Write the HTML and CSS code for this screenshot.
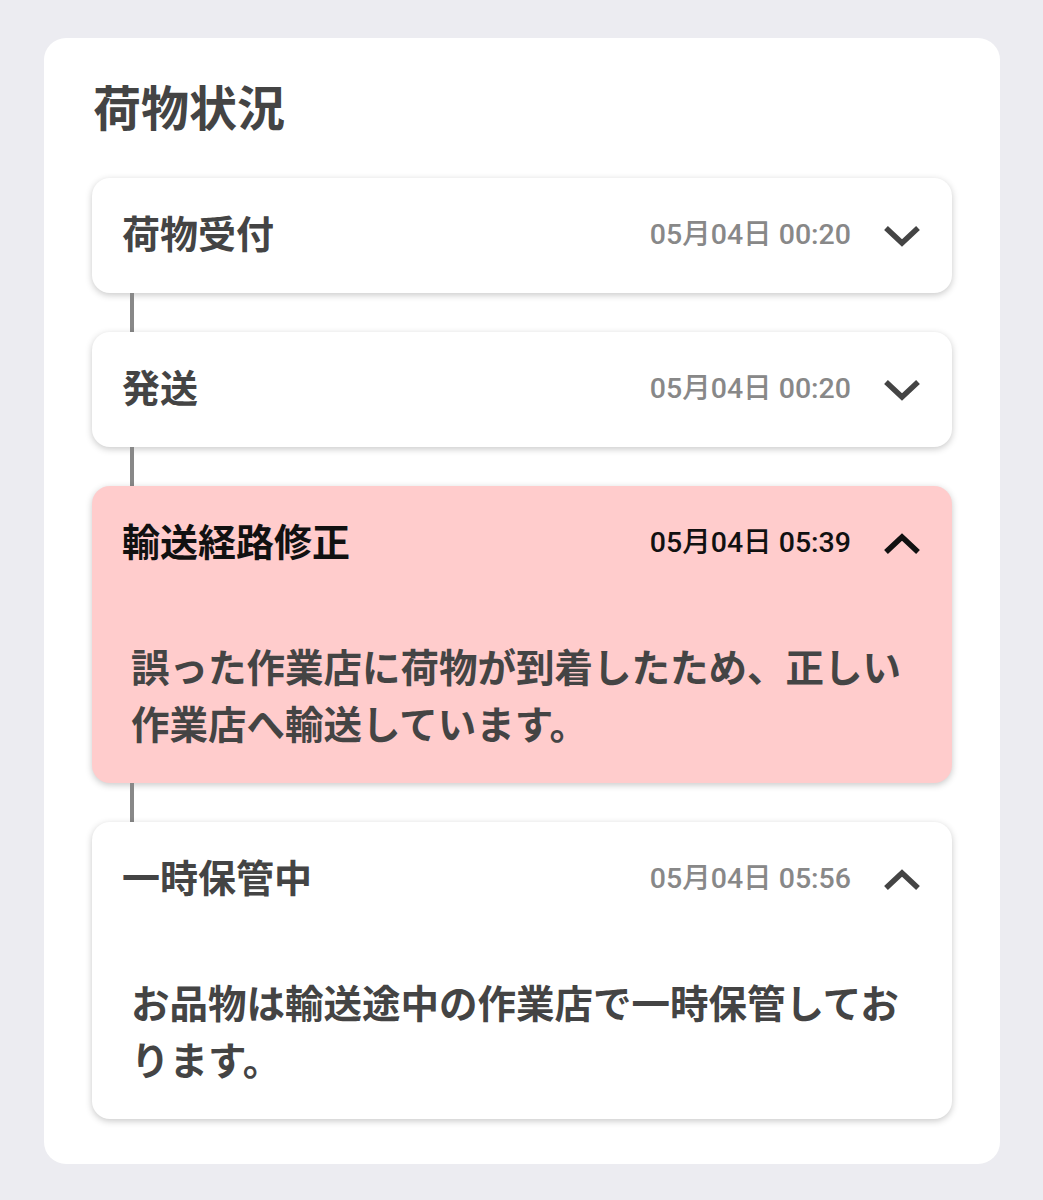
FILE: index.html
```html
<!DOCTYPE html>
<html lang="ja">
<head>
<meta charset="utf-8">
<link rel="stylesheet" href="styles.css">
</head>
<body>
<div class="panel">
  <h1 class="title">荷物状況</h1>
  <div class="timeline">
    <div class="card">
      <div class="card-head">
        <span class="card-title">荷物受付</span>
        <span class="card-date">05月04日 00:20</span>
        <svg class="chev" viewBox="0 0 38 24" width="38" height="24"><polyline points="3,4 19,19 35,4" /></svg>
      </div>
    </div>
    <div class="connector"></div>
    <div class="card">
      <div class="card-head">
        <span class="card-title">発送</span>
        <span class="card-date">05月04日 00:20</span>
        <svg class="chev" viewBox="0 0 38 24" width="38" height="24"><polyline points="3,4 19,19 35,4" /></svg>
      </div>
    </div>
    <div class="connector"></div>
    <div class="card card-alert">
      <div class="card-head">
        <span class="card-title">輸送経路修正</span>
        <span class="card-date">05月04日 05:39</span>
        <svg class="chev" viewBox="0 0 38 24" width="38" height="24"><polyline points="3,20 19,5 35,20" /></svg>
      </div>
      <p class="card-body">誤った作業店に荷物が到着したため、正しい作業店へ輸送しています。</p>
    </div>
    <div class="connector"></div>
    <div class="card">
      <div class="card-head">
        <span class="card-title">一時保管中</span>
        <span class="card-date">05月04日 05:56</span>
        <svg class="chev" viewBox="0 0 38 24" width="38" height="24"><polyline points="3,20 19,5 35,20" /></svg>
      </div>
      <p class="card-body">お品物は輸送途中の作業店で一時保管しております。</p>
    </div>
  </div>
</div>
</body>
</html>
```
FILE: styles.css
```css
html, body {
  margin: 0;
  padding: 0;
}
body {
  background: #ececf1;
  font-family: "Noto Sans CJK JP", "Noto Sans", sans-serif;
  color: #444;
  padding: 38px 43px 36px 44px;
}
.panel {
  background: #fff;
  border-radius: 22px;
  padding: 33px 48px 45px 48px;
}
.title {
  margin: 0 0 38px 0;
  font-size: 48px;
  font-weight: 700;
  line-height: 69px;
  color: #444;
  padding-left: 1px;
}
.timeline {
  display: flex;
  flex-direction: column;
}
.card {
  background: #fff;
  border-radius: 18px;
  box-shadow: 0 2px 7px rgba(0, 0, 0, 0.22);
}
.card-alert {
  background: #ffcccc;
}
.card-head {
  box-sizing: border-box;
  height: 115px;
  display: flex;
  align-items: center;
  padding: 0 31px 8px 30px;
}
.card-title {
  flex: 1;
  font-size: 38px;
  font-weight: 700;
  color: #444;
}
.card-alert .card-title {
  color: #111;
}
.card-date {
  font-family: Roboto, "Noto Sans CJK JP", sans-serif;
  font-size: 28.5px;
  font-weight: 500;
  color: #888;
  margin-right: 32px;
}
.card-alert .card-date {
  color: #111;
}
.chev {
  display: block;
  fill: none;
  stroke: #444;
  stroke-width: 5.5;
  margin-top: 8px;
}
.card-alert .chev {
  stroke: #111;
}
.card-body {
  margin: 0;
  padding: 36px 40px 32px 39px;
  font-size: 38.5px;
  font-weight: 700;
  line-height: 57px;
  color: #444;
}
.connector {
  height: 39px;
  width: 4px;
  margin-left: 38px;
  background: #888;
}
```
